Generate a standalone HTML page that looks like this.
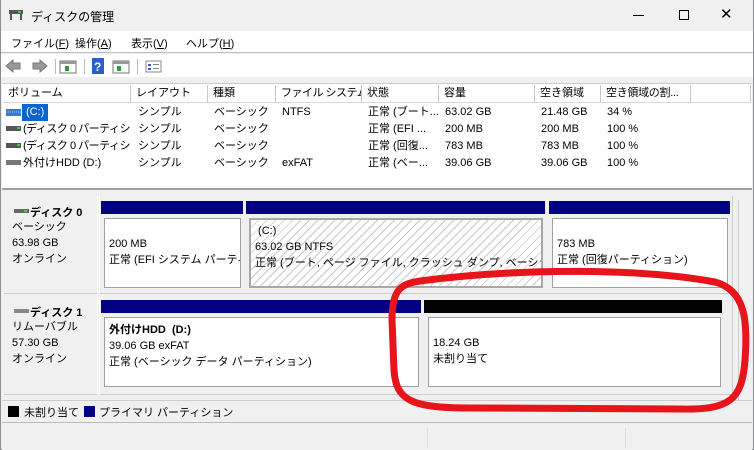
<!DOCTYPE html>
<html><head><meta charset="utf-8"><style>
*{margin:0;padding:0;box-sizing:border-box}
body{width:754px;height:450px;overflow:hidden;background:#f0f0f0;font-family:"Liberation Sans","Noto Sans CJK JP",sans-serif;font-size:11px;color:#000;position:relative}
.a{position:absolute;white-space:nowrap}
.hdr{position:absolute;top:85px;height:18px;border-right:1px solid #c8c8c8;border-bottom:1px solid #d8d8d8;padding-left:5px;line-height:17px;background:#fff;white-space:nowrap;overflow:hidden}
.row{position:absolute;left:0;width:738px;height:17px;line-height:17px}
.row span{position:absolute;white-space:nowrap;overflow:hidden}
.blue{position:absolute;background:#000080}
.box{position:absolute;background:#fff;border:1px solid #a0a0a0;padding:8px 0 0 4px;line-height:16px;white-space:nowrap;overflow:hidden}
</style></head><body>
<div class="a" style="left:0;top:0;width:754px;height:450px;border:1px solid #8a8f96;border-top:none"></div>
<div class="a" style="left:1px;top:0;width:752px;height:31px;background:#f0f0f0"></div>
<svg class="a" style="left:9px;top:9px" width="14" height="12"><rect x="0" y="1" width="14" height="4" fill="#555"/><rect x="9" y="2" width="3" height="2" fill="#4c4"/><rect x="1" y="5" width="2" height="6" fill="#555"/><rect x="11" y="5" width="2" height="6" fill="#555"/></svg>
<div class="a" style="left:31px;top:8px;font-size:12px">ディスクの管理</div>
<div class="a" style="left:633px;top:15px;width:11px;height:1px;background:#000"></div>
<div class="a" style="left:679px;top:10px;width:10px;height:10px;border:1px solid #000"></div>
<div class="a" style="left:720px;top:5px;font-size:15px">✕</div>
<div class="a" style="left:1px;top:31px;width:752px;height:22px;background:#fff;border-bottom:1px solid #b8bec6"></div>
<div class="a" style="left:11px;top:35px;font-size:11px">ファイル(<u>F</u>)</div>
<div class="a" style="left:75px;top:35px;font-size:11px">操作(<u>A</u>)</div>
<div class="a" style="left:131px;top:35px;font-size:11px">表示(<u>V</u>)</div>
<div class="a" style="left:186px;top:35px;font-size:11px">ヘルプ(<u>H</u>)</div>
<div class="a" style="left:1px;top:54px;width:752px;height:23px;background:#fff"></div>
<svg class="a" style="left:5px;top:58px" width="160" height="16">
<path d="M1 8 L8 2 V5 H15 V11 H8 V14 Z" fill="#999" stroke="#777"/>
<path d="M42 8 L35 2 V5 H28 V11 H35 V14 Z" fill="#999" stroke="#777"/>
<rect x="50" y="1" width="1" height="15" fill="#bbb"/>
<rect x="55" y="3" width="16" height="12" fill="#fff" stroke="#777"/><rect x="55" y="3" width="16" height="3" fill="#999"/><rect x="60" y="8" width="4" height="5" fill="#393"/>
<rect x="79" y="1" width="1" height="15" fill="#bbb"/>
<rect x="87" y="0" width="12" height="16" fill="#2a5ec8"/><text x="89" y="13" fill="#fff" font-size="12" font-weight="bold" font-family="Liberation Sans">?</text>
<rect x="108" y="3" width="16" height="12" fill="#fff" stroke="#777"/><rect x="108" y="3" width="16" height="3" fill="#999"/><rect x="112" y="8" width="4" height="5" fill="#393"/>
<rect x="132" y="1" width="1" height="15" fill="#bbb"/>
<rect x="141" y="3" width="15" height="11" fill="#fff" stroke="#888"/><rect x="143" y="6" width="3" height="2" fill="#36c"/><rect x="143" y="10" width="3" height="2" fill="#36c"/><rect x="148" y="6" width="6" height="1" fill="#888"/><rect x="148" y="10" width="6" height="1" fill="#888"/>
</svg>
<div class="a" style="left:2px;top:83px;width:750px;height:106px;background:#fff;border-top:1px solid #ccc"></div>
<div class="hdr" style="left:3px;width:128px">ボリューム</div>
<div class="hdr" style="left:131px;width:77px">レイアウト</div>
<div class="hdr" style="left:208px;width:68px">種類</div>
<div class="hdr" style="left:276px;width:86px;letter-spacing:-0.5px">ファイル システム</div>
<div class="hdr" style="left:362px;width:77px">状態</div>
<div class="hdr" style="left:439px;width:96px">容量</div>
<div class="hdr" style="left:535px;width:66px">空き領域</div>
<div class="hdr" style="left:601px;width:90px;letter-spacing:-0.3px">空き領域の割...</div>
<div class="hdr" style="left:691px;width:60px"></div>
<div class="row" style="top:104px"><svg class="a" style="left:6px;top:5px" width="15" height="7"><rect width="15" height="7" fill="#3a7ad0"/><path d="M0 3h15" stroke="#9cf" stroke-dasharray="1 1"/></svg><span style="left:22px;top:0;background:#0a64d0;color:#fff;padding:0 4px">(C:)</span><span style="left:138px">シンプル</span><span style="left:214px">ベーシック</span><span style="left:282px">NTFS</span><span style="left:368px">正常 (ブート...</span><span style="left:445px">63.02 GB</span><span style="left:541px">21.48 GB</span><span style="left:607px">34 %</span></div>
<div class="row" style="top:121px"><svg class="a" style="left:6px;top:5px" width="15" height="6"><rect width="15" height="5" fill="#555"/><rect x="11" y="1" width="3" height="2" fill="#4c4"/></svg><span style="left:23px;width:108px;letter-spacing:-0.5px">(ディスク 0 パーティシ...</span><span style="left:138px">シンプル</span><span style="left:214px">ベーシック</span><span style="left:368px">正常 (EFI ...</span><span style="left:445px">200 MB</span><span style="left:541px">200 MB</span><span style="left:607px">100 %</span></div>
<div class="row" style="top:138px"><svg class="a" style="left:6px;top:5px" width="15" height="6"><rect width="15" height="5" fill="#555"/><rect x="11" y="1" width="3" height="2" fill="#4c4"/></svg><span style="left:23px;width:108px;letter-spacing:-0.5px">(ディスク 0 パーティシ...</span><span style="left:138px">シンプル</span><span style="left:214px">ベーシック</span><span style="left:368px">正常 (回復...</span><span style="left:445px">783 MB</span><span style="left:541px">783 MB</span><span style="left:607px">100 %</span></div>
<div class="row" style="top:155px"><svg class="a" style="left:6px;top:5px" width="15" height="6"><rect width="15" height="5" fill="#777"/></svg><span style="left:23px">外付けHDD (D:)</span><span style="left:138px">シンプル</span><span style="left:214px">ベーシック</span><span style="left:282px">exFAT</span><span style="left:368px">正常 (ベー...</span><span style="left:445px">39.06 GB</span><span style="left:541px">39.06 GB</span><span style="left:607px">100 %</span></div>
<div class="a" style="left:2px;top:188px;width:750px;height:2px;background:#a0a0a0"></div>
<div class="a" style="left:2px;top:191px;width:736px;height:207px;background:#f0f0f0"></div>
<div class="a" style="left:738px;top:200px;width:9px;height:200px;border-left:1px solid #ccc"></div>
<div class="a" style="left:4px;top:196px;width:94px;height:98px;border-right:1px solid #fff;border-bottom:1px solid #ccc"></div>
<svg class="a" style="left:14px;top:209px" width="15" height="5"><rect width="15" height="4" fill="#666"/><rect x="10" y="1" width="3" height="2" fill="#4c4"/></svg>
<div class="a" style="left:30px;top:204px;font-weight:bold">ディスク 0</div>
<div class="a" style="left:12px;top:219px;line-height:16px">ベーシック<br>63.98 GB<br>オンライン</div>
<div class="a" style="left:99px;top:196px;width:634px;height:98px;border:1px solid #ccc;border-top:none;border-left:1px solid #fff"></div>
<div class="blue" style="left:101px;top:201px;width:142px;height:13px"></div>
<div class="blue" style="left:246px;top:201px;width:299px;height:13px"></div>
<div class="blue" style="left:549px;top:201px;width:181px;height:13px"></div>
<div class="box" style="left:104px;top:218px;width:137px;height:70px;padding-top:17px">200 MB<br>正常 (EFI システム パーティシ</div>
<div class="box" style="left:249px;top:218px;width:294px;height:70px;padding-top:3px;background:repeating-linear-gradient(135deg,#fff 0 5px,#c8c8c8 5px 6px);border:2px solid #a8a8a8">&nbsp;(C:)<br>63.02 GB NTFS<br>正常 (ブート, ページ ファイル, クラッシュ ダンプ, ベーシック データ</div>
<div class="box" style="left:552px;top:218px;width:176px;height:70px;padding-top:17px">783 MB<br>正常 (回復パーティション)</div>
<div class="a" style="left:4px;top:297px;width:94px;height:98px;border-right:1px solid #fff;border-bottom:1px solid #ccc"></div>
<svg class="a" style="left:14px;top:309px" width="15" height="5"><rect width="15" height="4" fill="#888"/></svg>
<div class="a" style="left:30px;top:304px;font-weight:bold">ディスク 1</div>
<div class="a" style="left:12px;top:319px;line-height:16px">リムーバブル<br>57.30 GB<br>オンライン</div>
<div class="a" style="left:99px;top:297px;width:634px;height:98px;border:1px solid #ccc;border-top:none;border-left:1px solid #fff"></div>
<div class="blue" style="left:101px;top:300px;width:320px;height:13px"></div>
<div class="blue" style="left:424px;top:300px;width:298px;height:13px;background:#000"></div>
<div class="box" style="left:104px;top:317px;width:315px;height:70px;padding-top:4px"><b>外付けHDD&nbsp; (D:)</b><br>39.06 GB exFAT<br>正常 (ベーシック データ パーティション)</div>
<div class="box" style="left:428px;top:317px;width:293px;height:70px;padding-top:17px">18.24 GB<br>未割り当て</div>
<div class="a" style="left:2px;top:400px;width:750px;height:1px;background:#ccc"></div>
<div class="a" style="left:8px;top:406px;width:11px;height:11px;background:#000"></div>
<div class="a" style="left:24px;top:404px">未割り当て</div>
<div class="a" style="left:84px;top:406px;width:11px;height:11px;background:#000080"></div>
<div class="a" style="left:99px;top:404px">プライマリ パーティション</div>
<div class="a" style="left:2px;top:422px;width:750px;height:1px;background:#bbb"></div>
<div class="a" style="left:2px;top:423px;width:750px;height:27px;background:#f0f0f0"></div>
<div class="a" style="left:427px;top:428px;width:1px;height:20px;background:#ddd"></div>
<div class="a" style="left:625px;top:428px;width:1px;height:20px;background:#ddd"></div>
<svg class="a" style="left:0;top:0" width="754" height="450"><path d="M420 281 C520 268 640 268 715 282 C745 290 748 320 745 360 C742 400 730 410 680 409 L470 408 C410 408 396 400 394 370 L392 320 C392 290 400 284 420 281 Z" fill="none" stroke="#e8141c" stroke-width="7"/></svg>
</body></html>
